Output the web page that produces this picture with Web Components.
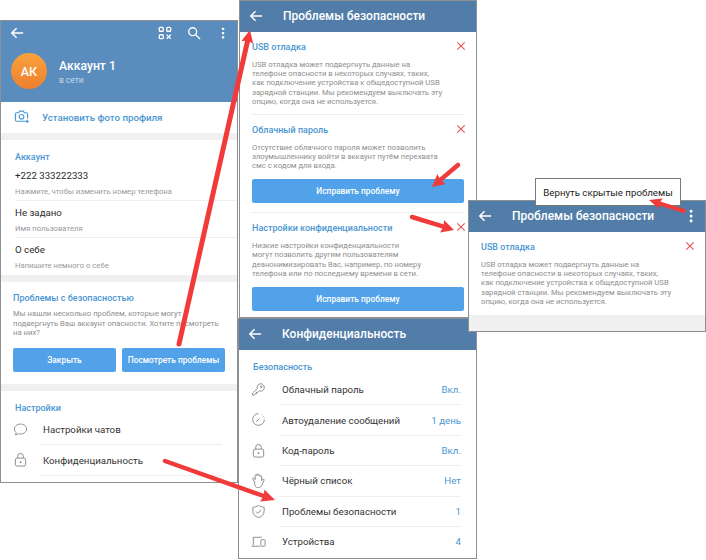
<!DOCTYPE html>
<html lang="ru">
<head>
<meta charset="utf-8">
<title>Проблемы безопасности</title>
<style>
    html, body { margin: 0; height: 100%; background: #fff; }
    body { position: relative; width: 706px; height: 560px; overflow: hidden; font-family: Roboto, "Liberation Sans", sans-serif; }
</style>
</head>
<body>

<tg-window style="left:0;top:20px;width:238px;height:463px">
    <tg-profile name="Аккаунт 1" status="в сети" initials="АК"></tg-profile>
    <tg-row kind="action" label="Установить фото профиля" icon="camera"></tg-row>
    <tg-gap></tg-gap>
    <tg-section title="Аккаунт">
        <tg-field value="+222 333222333" hint="Нажмите, чтобы изменить номер телефона"></tg-field>
        <tg-field value="Не задано" hint="Имя пользователя"></tg-field>
        <tg-field value="О себе" hint="Напишите немного о себе" last></tg-field>
    </tg-section>
    <tg-gap></tg-gap>
    <tg-alert title="Проблемы с безопасностью">
        Мы нашли несколько проблем, которые могут<br>подвергнуть Ваш аккаунт опасности. Хотите посмотреть<br>на них?
    </tg-alert>
    <tg-gap></tg-gap>
    <tg-section title="Настройки">
        <tg-row label="Настройки чатов" icon="chat" inset="40"></tg-row>
        <tg-row label="Конфиденциальность" icon="lock" inset="40"></tg-row>
    </tg-section>
</tg-window>

<tg-window style="left:239px;top:0;width:238px;height:318px">
    <tg-bar title="Проблемы безопасности"></tg-bar>
    <tg-issue title="USB отладка" divider>
        USB отладка может подвергнуть данные на<br>телефоне опасности в некоторых случаях, таких,<br>как подключение устройства к общедоступной USB<br>зарядной станции. Мы рекомендуем выключать эту<br>опцию, когда она не используется.
    </tg-issue>
    <tg-issue title="Облачный пароль" action="Исправить проблему" divider>
        Отсутствие облачного пароля может позволить<br>злоумышленнику войти в аккаунт путём перехвата<br>смс с кодом для входа.
    </tg-issue>
    <tg-issue title="Настройки конфиденциальности" action="Исправить проблему">
        Низкие настройки конфиденциальности<br>могут позволить другим пользователям<br>деанонимизировать Вас, например, по номеру<br>телефона или по последнему времени в сети.
    </tg-issue>
</tg-window>

<tg-window style="left:238px;top:318px;width:239px;height:241px">
    <tg-bar title="Конфиденциальность"></tg-bar>
    <tg-section title="Безопасность" head="25">
        <tg-row label="Облачный пароль" value="Вкл." icon="key"></tg-row>
        <tg-row label="Автоудаление сообщений" value="1 день" icon="timer"></tg-row>
        <tg-row label="Код-пароль" value="Вкл." icon="lock"></tg-row>
        <tg-row label="Чёрный список" value="Нет" icon="hand"></tg-row>
        <tg-row label="Проблемы безопасности" value="1" icon="shield"></tg-row>
        <tg-row label="Устройства" value="4" icon="devices" last></tg-row>
    </tg-section>
</tg-window>

<tg-window style="left:468px;top:200px;width:238px;height:132px">
    <tg-bar title="Проблемы безопасности" menu></tg-bar>
    <tg-issue title="USB отладка">
        USB отладка может подвергнуть данные на<br>телефоне опасности в некоторых случаях, таких,<br>как подключение устройства к общедоступной USB<br>зарядной станции. Мы рекомендуем выключать эту<br>опцию, когда она не используется.
    </tg-issue>
    <tg-gap fill></tg-gap>
</tg-window>

<tg-popup style="left:535px;top:178px">Вернуть скрытые проблемы</tg-popup>

<tg-arrows></tg-arrows>

<script>
const BLUE = "#4a96d2"
const BAR = "#517da8"
const PROFILE = "#5a8dbd"

const ICONS = {
    back: `<path d="M15 8H2.5M7.5 2.5 2 8l5.5 5.5" fill="none" stroke="currentColor" stroke-width="1.7"/>`,
    qr: `<g fill="none" stroke="currentColor" stroke-width="1.5"><rect x="1.5" y="1.5" width="4.5" height="4.5" rx="1"/><rect x="10" y="1.5" width="4.5" height="4.5" rx="1"/><rect x="1.5" y="10" width="4.5" height="4.5" rx="1"/><path d="m10 10 1.6 1.6m1.4 1.4 1.6 1.6m0-4.6L10 14.6" /></g>`,
    search: `<g fill="none" stroke="currentColor" stroke-width="1.6"><circle cx="6.5" cy="6.5" r="4.5"/><path d="m10 10 5 5"/></g>`,
    dots: `<g fill="currentColor"><rect x="6.8" y="2" width="2.6" height="2.6" rx=".6"/><rect x="6.8" y="6.8" width="2.6" height="2.6" rx=".6"/><rect x="6.8" y="11.6" width="2.6" height="2.6" rx=".6"/></g>`,
    camera: `<g fill="none" stroke="currentColor" stroke-width="1.2"><path d="M12.5 13H3a1.5 1.5 0 0 1-1.5-1.500V5.500A1.500 1.500 0 0 1 3 4h2l1-1.800h4L11 4h2a1.500 1.500 0 0 1 1.500 1.500V10"/><circle cx="8" cy="8.300" r="2.500"/><path d="M14 11.500v3.500M12.300 13.200h3.400"/></g>`,
    chat: `<path d="M8 2.200c3.700 0 6.500 2.400 6.500 5.300s-2.800 5.300-6.500 5.300c-.8 0-1.500-.1-2.200-.3-.8.7-2 1.200-3.300 1.200.5-.7.8-1.500.8-2.500C2.200 10.300 1.500 9 1.500 7.500c0-2.900 2.800-5.300 6.500-5.300Z" fill="none" stroke="currentColor" stroke-width="1"/>`,
    lock: `<g fill="none" stroke="currentColor" stroke-width="1"><rect x="2.500" y="6.500" width="11" height="8.500" rx="2"/><path d="M5 6.500V4.500a3 3 0 0 1 6 0v2"/></g><circle cx="8" cy="10.800" r="1" fill="currentColor"/>`,
    key: `<g fill="none" stroke="currentColor" stroke-width="1"><path d="M10.200 1.800a4 4 0 0 1 3.800 5.200 4 4 0 0 1-5 2.400L7.500 11H5.800v1.700H4.100L3 14H1.500v-2L6.700 7a4 4 0 0 1 3.500-5.200Z"/><circle cx="11" cy="5" r=".9"/></g>`,
    timer: `<g fill="none" stroke="currentColor" stroke-width="1"><path d="M8 1.800A6.200 6.200 0 1 0 14.200 8" /><path d="m5.500 10.500 3.500-3.500"/><path d="M11 2.500l.5.300M13 4.200l.3.500M14 6l.1.500" stroke-width="1.100"/></g>`,
    hand: `<path transform="translate(-1.600 -1.400) scale(1.200)" d="M4.500 9 3 6.700c-.6-.9.600-1.600 1.200-.8L5 7V3.500c0-1 1.400-1 1.400 0V2.600c0-1 1.500-1 1.500 0v.7c0-1 1.500-1 1.500 0v1c0-1 1.400-1 1.400 0V8l.8-1c.7-.8 1.800-.1 1.300.8L11 12c-.6 1.300-1.600 2.300-3.400 2.300-2 0-3-1.300-3.100-5.300Z" fill="none" stroke="currentColor" stroke-width=".85"/>`,
    shield: `<g fill="none" stroke="currentColor" stroke-width="1"><path d="M8 1.500c1.800 1.200 3.800 1.800 6 2v4.200c0 3.300-2.300 5.700-6 6.800-3.700-1.100-6-3.500-6-6.800V3.500c2.200-.2 4.200-.8 6-2Z"/><path d="m5.300 8 2 2 3.600-3.800"/></g>`,
    devices: `<g fill="none" stroke="currentColor" stroke-width="1"><path d="M2.500 12V3.500h9M.5 13h9"/><rect x="10.500" y="6" width="4.500" height="7" rx=".8"/></g>`
}

function icon(name, size) {
    return `<svg width="${size}" height="${size}" viewBox="0 0 16 16" aria-hidden="true">${ICONS[name]}</svg>`
}

// the frame of one screenshot on the free canvas
class TgWindow extends HTMLElement {
    constructor() {
        super();
        this.attachShadow({ mode: 'open' });
        this.shadowRoot.innerHTML = `
        <style>
            :host {
                position:absolute;
                box-sizing:border-box;
                display:flex;
                flex-direction:column;
                background:#fff;
                border:1px solid #8c8f93;
                overflow:hidden;
            }
        </style>
        <slot></slot>
        `
    }
}
customElements.define('tg-window', TgWindow);

class TgBar extends HTMLElement {
    constructor() {
        super();
        let title = this.getAttribute('title')
        let menu = this.hasAttribute('menu')
        this.removeAttribute('title')

        this.attachShadow({ mode: 'open' });
        this.shadowRoot.innerHTML = `
        <style>
            :host {
                display:flex;
                align-items:center;
                flex:none;
                box-sizing:border-box;
                height:31px;
                padding:0 6px 2px 9px;
                background:${BAR};
                color:#fff;
            }
            b {
                font-size:12px;
                font-weight:500;
                margin-left:20px;
                flex:1;
                white-space:nowrap;
            }
            svg { flex:none; }
        </style>
        ${icon('back', 14)}
        <b>${title}</b>
        ${menu ? icon('dots', 16) : ''}
        `
    }
}
customElements.define('tg-bar', TgBar);

class TgProfile extends HTMLElement {
    constructor() {
        super();
        let name = this.getAttribute('name')
        let status = this.getAttribute('status')
        let initials = this.getAttribute('initials')

        this.attachShadow({ mode: 'open' });
        this.shadowRoot.innerHTML = `
        <style>
            :host {
                display:block;
                flex:none;
                height:81px;
                background:${PROFILE};
                color:#fff;
            }
            .top {
                display:flex;
                align-items:center;
                height:24px;
                padding:0 7px 0 9px;
            }
            .tools {
                margin-left:auto;
                display:flex;
                gap:15px;
                align-items:center;
            }
            .who {
                display:flex;
                align-items:center;
                gap:12px;
                padding:8px 0 0 10px;
            }
            .avatar {
                width:36px;
                height:36px;
                border-radius:50%;
                background:linear-gradient(#f9a23c, #ef7f2e);
                display:flex;
                align-items:center;
                justify-content:center;
                font-size:12.500px;
                font-weight:500;
            }
            .text { padding-top:4px; }
            .name { font-size:12.200px; font-weight:500; line-height:15px; }
            .status { font-size:8.400px; line-height:13px; color:#c4d8ea; }
        </style>
        <div class="top">
            ${icon('back', 14)}
            <div class="tools">${icon('qr', 14)}${icon('search', 14)}${icon('dots', 14)}</div>
        </div>
        <div class="who">
            <div class="avatar">${initials}</div>
            <div class="text">
                <div class="name">${name}</div>
                <div class="status">${status}</div>
            </div>
        </div>
        `
    }
}
customElements.define('tg-profile', TgProfile);

class TgGap extends HTMLElement {
    constructor() {
        super();
        let fill = this.hasAttribute('fill')
        this.attachShadow({ mode: 'open' });
        this.shadowRoot.innerHTML = `
        <style>
            :host {
                display:block;
                flex:${fill ? '1' : 'none'};
                height:${fill ? 'auto' : '7px'};
                background:#f0f0f0;
            }
        </style>
        `
    }
}
customElements.define('tg-gap', TgGap);

class TgSection extends HTMLElement {
    constructor() {
        super();
        let title = this.getAttribute('title')
        let head = this.getAttribute('head') || 24
        this.removeAttribute('title')

        this.attachShadow({ mode: 'open' });
        this.shadowRoot.innerHTML = `
        <style>
            :host { display:block; flex:none; }
            h3 {
                margin:0;
                padding:10px 0 0 14px;
                height:${head - 10}px;
                line-height:14px;
                font-size:9px;
                font-weight:500;
                color:${BLUE};
            }
        </style>
        <h3>${title}</h3>
        <slot></slot>
        `
    }
}
customElements.define('tg-section', TgSection);

class TgField extends HTMLElement {
    constructor() {
        super();
        let value = this.getAttribute('value')
        let hint = this.getAttribute('hint')
        let last = this.hasAttribute('last')

        this.attachShadow({ mode: 'open' });
        this.shadowRoot.innerHTML = `
        <style>
            :host {
                display:block;
                box-sizing:border-box;
                height:37px;
                margin-left:14px;
                padding-top:4px;
                border-bottom:1px solid ${last ? 'transparent' : '#eeeeee'};
            }
            .value { font-size:9.700px; line-height:16px; color:#2b2b2b; }
            .hint { font-size:7.700px; line-height:13px; padding-top:1px; color:#9a9a9a; }
        </style>
        <div class="value">${value}</div>
        <div class="hint">${hint}</div>
        `
    }
}
customElements.define('tg-field', TgField);

class TgRow extends HTMLElement {
    constructor() {
        super();
        let label = this.getAttribute('label')
        let value = this.getAttribute('value')
        let name = this.getAttribute('icon')
        let kind = this.getAttribute('kind')
        let inset = this.getAttribute('inset') || 41
        let last = this.hasAttribute('last')

        let action = kind == "action"

        this.attachShadow({ mode: 'open' });
        this.shadowRoot.innerHTML = `
        <style>
            :host {
                display:block;
                position:relative;
                flex:none;
                box-sizing:border-box;
                height:${action ? '31px' : '30.400px'};
                padding-left:${inset - 1}px;
                padding-right:15px;
            }
            .in {
                display:flex;
                align-items:center;
                justify-content:space-between;
                height:100%;
                box-sizing:border-box;
                border-bottom:1px solid ${action || last ? 'transparent' : '#eeeeee'};
            }
            .label {
                margin-left:${action ? 1 : 3}px;
                font-size:9.700px;
                font-weight:${action ? '500' : '400'};
                color:${action ? BLUE : '#333333'};
                white-space:nowrap;
            }
            .value { font-size:9.700px; color:${BLUE}; }
            svg {
                position:absolute;
                left:${action ? 13 : 12}px;
                top:7px;
                color:${action ? BLUE : '#85898c'};
            }
        </style>
        ${icon(name, 15)}
        <div class="in">
            <span class="label">${label}</span>
            ${value ? `<span class="value">${value}</span>` : ''}
        </div>
        `
    }
}
customElements.define('tg-row', TgRow);

class TgButton extends HTMLElement {
    constructor() {
        super();
        this.attachShadow({ mode: 'open' });
        this.shadowRoot.innerHTML = `
        <style>
            :host {
                display:flex;
                align-items:center;
                justify-content:center;
                flex:1 1 0;
                height:24px;
                background:#51a2e8;
                border-radius:2px;
                color:#fff;
                font-size:8.400px;
                font-weight:500;
                white-space:nowrap;
            }
        </style>
        <slot></slot>
        `
    }
}
customElements.define('tg-button', TgButton);

class TgAlert extends HTMLElement {
    constructor() {
        super();
        let title = this.getAttribute('title')
        this.removeAttribute('title')

        this.attachShadow({ mode: 'open' });
        this.shadowRoot.innerHTML = `
        <style>
            :host {
                display:block;
                flex:none;
                padding:8px 12px 12px;
            }
            h3 {
                margin:0 0 3px;
                line-height:16px;
                font-size:9px;
                font-weight:500;
                color:${BLUE};
            }
            .text {
                font-size:7.700px;
                line-height:9.500px;
                height:29px;
                color:#8e8e8e;
                white-space:nowrap;
            }
            .buttons { display:flex; gap:6px; margin-top:10px; }
        </style>
        <h3>${title}</h3>
        <div class="text"><slot></slot></div>
        <div class="buttons">
            <tg-button>Закрыть</tg-button>
            <tg-button>Посмотреть проблемы</tg-button>
        </div>
        `
    }
}
customElements.define('tg-alert', TgAlert);

class TgIssue extends HTMLElement {
    constructor() {
        super();
        let title = this.getAttribute('title')
        let action = this.getAttribute('action')
        let divider = this.hasAttribute('divider')
        this.removeAttribute('title')

        this.attachShadow({ mode: 'open' });
        this.shadowRoot.innerHTML = `
        <style>
            :host {
                display:block;
                flex:none;
                padding:8px 12px 0;
            }
            .head {
                display:flex;
                align-items:center;
                justify-content:space-between;
                height:14px;
            }
            h3 {
                margin:0;
                font-size:9px;
                font-weight:500;
                color:${BLUE};
            }
            svg { margin-right:-2px; margin-top:-2px; }
            .text {
                margin-top:5.500px;
                font-size:7.700px;
                line-height:9.400px;
                color:#8e8e8e;
                white-space:nowrap;
            }
            tg-button { margin-top:8.500px; }
            .end {
                margin-top:${action ? '9px' : '7.500px'};
                border-bottom:1px solid ${divider ? '#eeeeee' : 'transparent'};
            }
        </style>
        <div class="head">
            <h3>${title}</h3>
            <svg width="10" height="10" viewBox="0 0 10 10"><path d="M1.300 1.300l7.400 7.400M8.700 1.300l-7.400 7.400" stroke="#e25555" stroke-width="1.100"/></svg>
        </div>
        <div class="text"><slot></slot></div>
        ${action ? `<tg-button>${action}</tg-button>` : ''}
        <div class="end"></div>
        `
    }
}
customElements.define('tg-issue', TgIssue);

class TgPopup extends HTMLElement {
    constructor() {
        super();
        this.attachShadow({ mode: 'open' });
        this.shadowRoot.innerHTML = `
        <style>
            :host {
                position:absolute;
                box-sizing:border-box;
                display:flex;
                align-items:center;
                justify-content:center;
                width:146px;
                height:28px;
                background:#fff;
                border:1px solid #77797c;
                color:#222;
                font-size:9.700px;
                white-space:nowrap;
            }
        </style>
        <slot></slot>
        `
    }
}
customElements.define('tg-popup', TgPopup);

// red callouts drawn over all the windows
class TgArrows extends HTMLElement {
    constructor() {
        super();
        let arrow = (x1, y1, x2, y2, w, head, len) => {
            let a = Math.atan2(y2 - y1, x2 - x1)
            let ux = Math.cos(a), uy = Math.sin(a)
            let bx = x2 - ux * len, by = y2 - uy * len
            let px = -uy, py = ux
            let pts = [
                [bx + px * head / 2 - ux * 1.5, by + py * head / 2 - uy * 1.5],
                [x2, y2],
                [bx - px * head / 2 - ux * 1.5, by - py * head / 2 - uy * 1.5],
                [bx, by]
            ]
            return `<line x1="${x1}" y1="${y1}" x2="${bx.toFixed(1)}" y2="${by.toFixed(1)}" stroke="#f13a3a" stroke-width="${w}" stroke-linecap="round"/>
            <polygon points="${pts.map(p => p[0].toFixed(1) + ',' + p[1].toFixed(1)).join(' ')}"/>`
        }

        this.attachShadow({ mode: 'open' });
        this.shadowRoot.innerHTML = `
        <style>
            :host { position:absolute; left:0; top:0; width:706px; height:560px; pointer-events:none; }
            svg { display:block; }
        </style>
        <svg width="706" height="560" viewBox="0 0 706 560" fill="#f13a3a">
            ${arrow(179, 344, 250, 30, 5, 12, 11)}
            ${arrow(458, 165, 432, 187, 4.5, 13, 11)}
            ${arrow(412, 217, 454, 230, 4.5, 13, 11)}
            ${arrow(165, 461, 275, 500, 4.5, 13, 12)}
            ${arrow(684, 211, 649, 200, 4, 11, 11)}
        </svg>
        `
    }
}
customElements.define('tg-arrows', TgArrows);
</script>
</body>
</html>
